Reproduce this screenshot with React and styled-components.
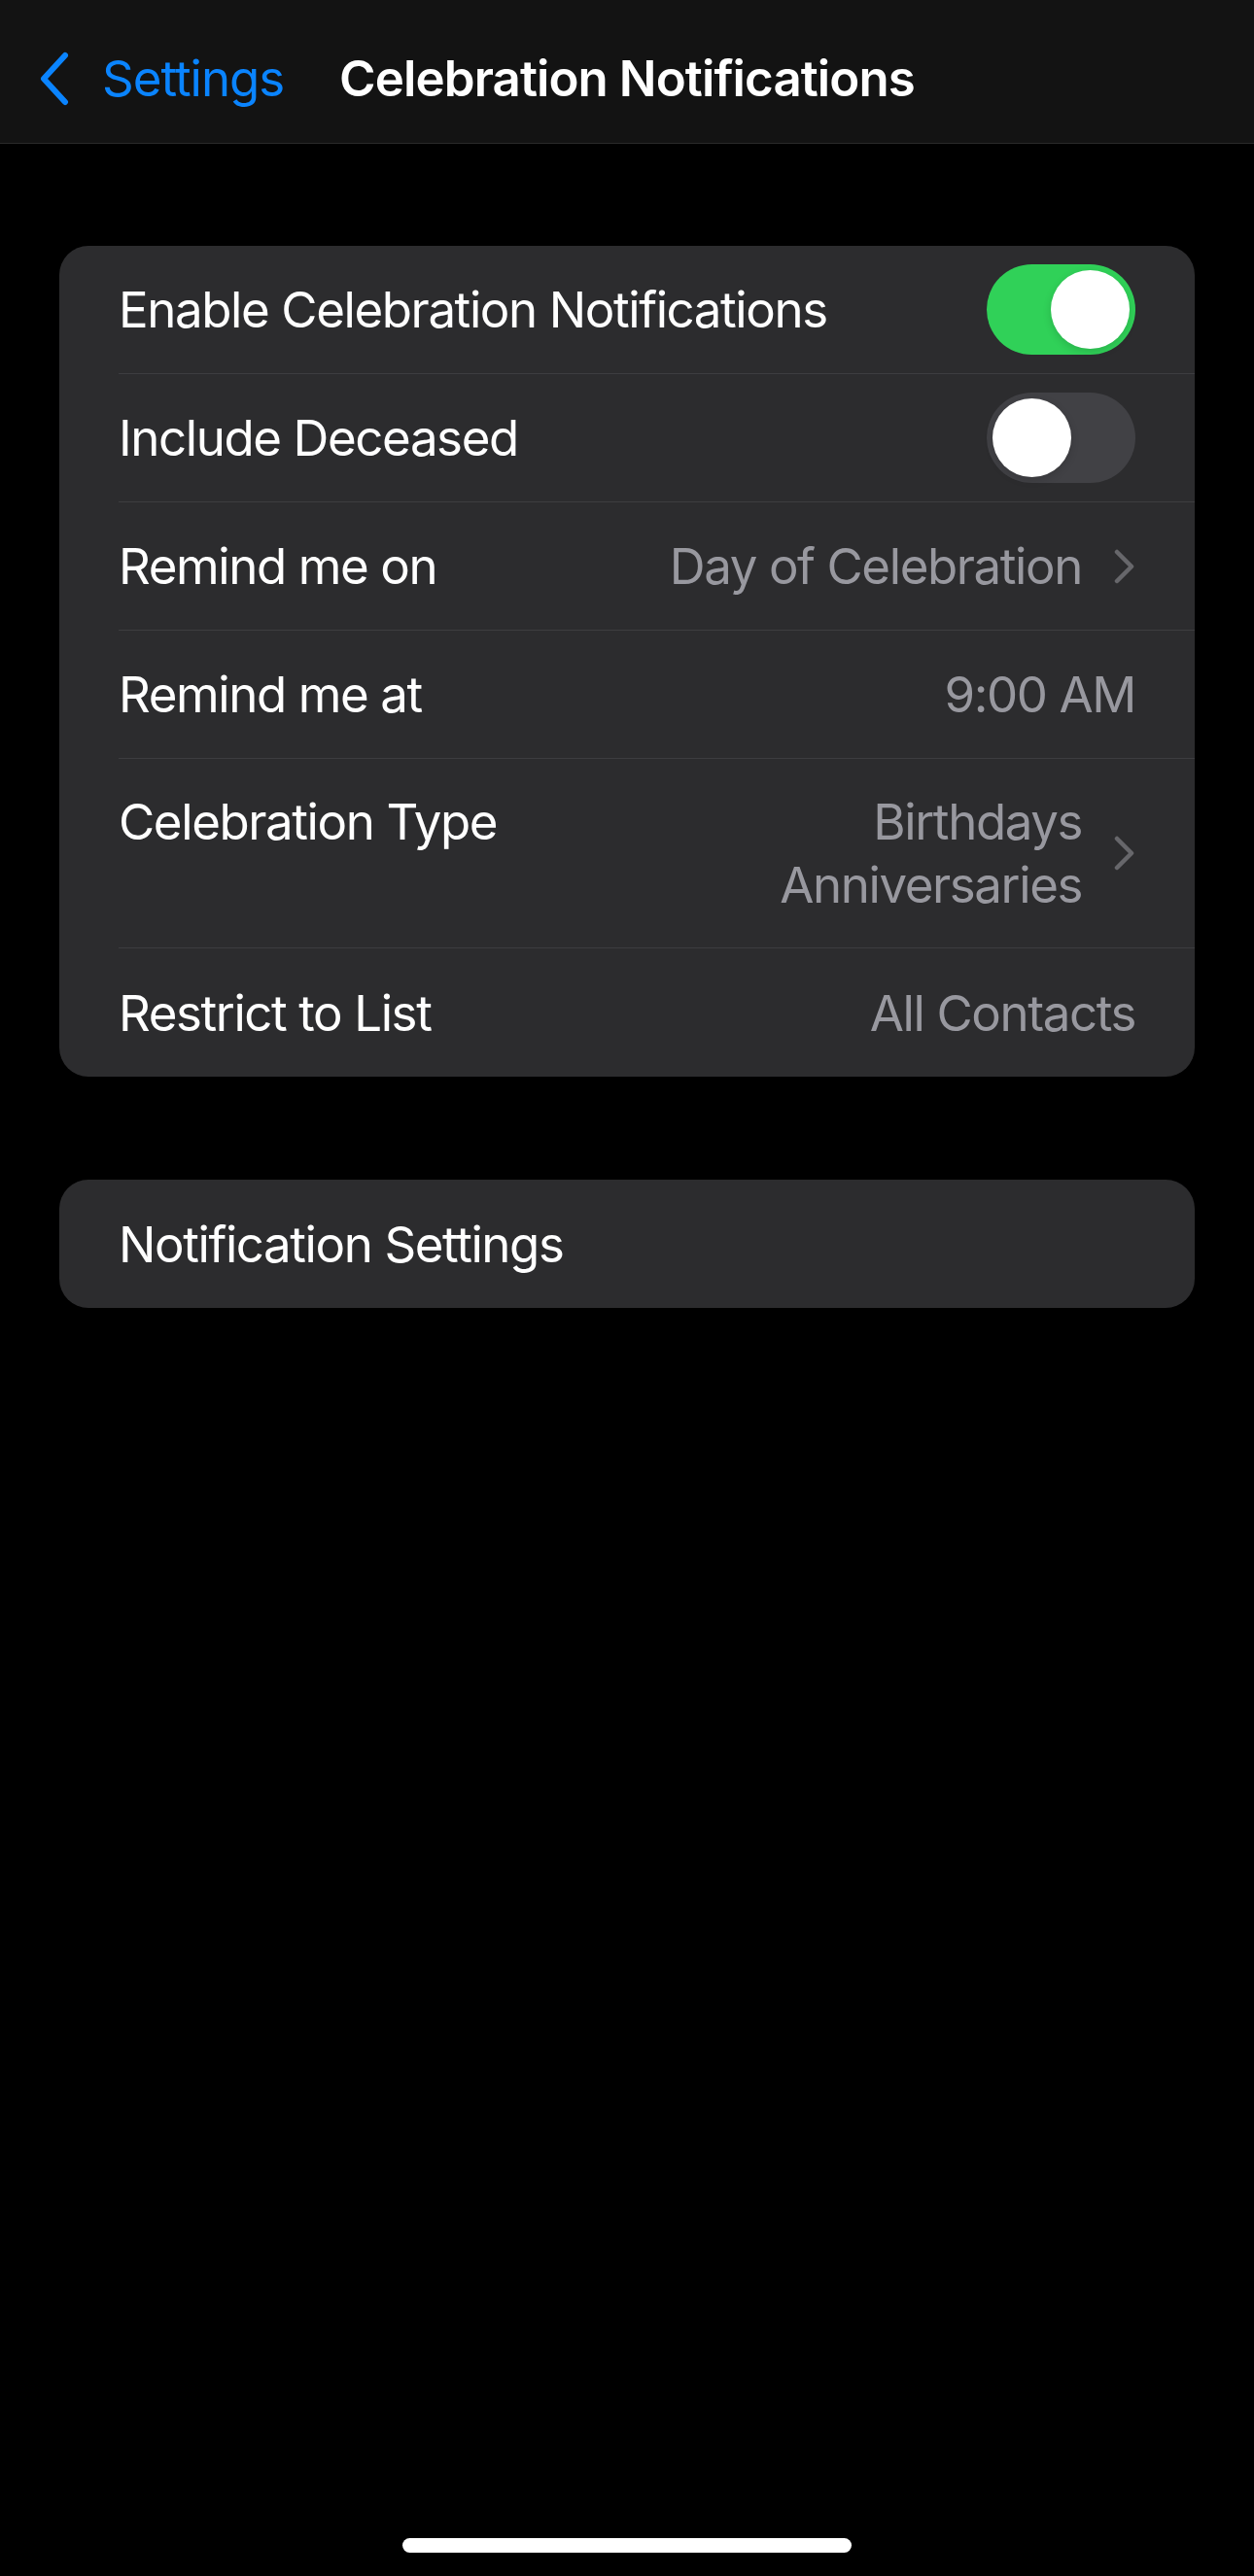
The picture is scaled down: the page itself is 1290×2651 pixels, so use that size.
import React from 'react';
import styled, { createGlobalStyle } from 'styled-components';

const GlobalStyle = createGlobalStyle`
  html, body {
    margin: 0;
    padding: 0;
    background: #000;
  }
  body {
    font-family: Inter, "Noto Sans", sans-serif;
    -webkit-font-smoothing: antialiased;
  }
`;

const Screen = styled.div`
  width: 1290px;
  height: 2651px;
  background: #000;
  display: flex;
  flex-direction: column;
  overflow: hidden;
`;

const NavBar = styled.header`
  height: 148px;
  box-sizing: border-box;
  padding-top: 14px;
  background: #131313;
  border-bottom: 1px solid #2a2a2a;
  display: grid;
  grid-template-columns: 1fr auto 1fr;
  align-items: center;
`;

const BackButton = styled.button`
  justify-self: start;
  display: flex;
  align-items: center;
  gap: 33px;
  background: none;
  border: 0;
  padding: 0 0 0 40px;
  color: #0a84ff;
  font-family: Inter, sans-serif;
  font-size: 51px;
  font-weight: 400;
  letter-spacing: -1px;
  cursor: pointer;
`;

const Title = styled.h1`
  margin: 0;
  color: #fff;
  font-size: 51px;
  font-weight: 600;
  letter-spacing: -0.9px;
`;

const Content = styled.main`
  display: flex;
  flex-direction: column;
  gap: 106px;
  padding: 105px 61px 0;
`;

const Group = styled.section`
  background: #2c2c2e;
  border-radius: 30px;
  padding-left: 61px;
  overflow: hidden;
`;

const Row = styled.div`
  display: flex;
  align-items: center;
  justify-content: space-between;
  gap: 30px;
  min-height: 132px;
  box-sizing: border-box;
  padding: ${p => (p.$multi ? '32px 61px 32px 0' : '0 61px 0 0')};
  border-bottom: 1px solid #3d3d40;
  font-size: 51px;
  line-height: 65px;
  letter-spacing: -1.4px;

  &:last-child {
    border-bottom: 0;
  }
`;

const Label = styled.span`
  color: #fff;
  align-self: ${p => (p.$top ? 'flex-start' : 'center')};
`;

const Detail = styled.span`
  display: flex;
  align-items: center;
  gap: 33px;
  color: #98989f;
  text-align: right;
`;

const Lines = styled.span`
  display: flex;
  flex-direction: column;
  align-items: flex-end;
`;

const Switch = styled.span`
  width: 153px;
  height: 93px;
  box-sizing: border-box;
  padding: 6px;
  border-radius: 47px;
  background: ${p => (p.$on ? '#30d158' : '#414145')};
  display: flex;
  justify-content: ${p => (p.$on ? 'flex-end' : 'flex-start')};
  flex-shrink: 0;
`;

const Knob = styled.span`
  width: 81px;
  height: 81px;
  border-radius: 50%;
  background: #fff;
  box-shadow: 0 3px 8px rgba(0, 0, 0, 0.15);
`;

const HomeIndicator = styled.div`
  margin-top: auto;
  margin-bottom: 24px;
  align-self: center;
  width: 462px;
  height: 15px;
  border-radius: 8px;
  background: #fff;
`;

const BackChevron = () => (
  <svg width="32" height="56" viewBox="0 0 32 56" fill="none">
    <path d="M27 4 L5 28 L27 52" stroke="#0a84ff" strokeWidth="6" strokeLinecap="round" strokeLinejoin="round" />
  </svg>
);

const Chevron = () => (
  <svg width="22" height="36" viewBox="0 0 22 36" fill="none">
    <path d="M3 3 L18 18 L3 33" stroke="#67676b" strokeWidth="4.5" strokeLinecap="round" strokeLinejoin="round" />
  </svg>
);

const Toggle = ({ on }) => (
  <Switch $on={on}>
    <Knob />
  </Switch>
);

const App = () => {
  return (
    <Screen>
      <GlobalStyle />
      <NavBar>
        <BackButton>
          <BackChevron />
          Settings
        </BackButton>
        <Title>Celebration Notifications</Title>
        <span />
      </NavBar>
      <Content>
        <Group>
          <Row>
            <Label>Enable Celebration Notifications</Label>
            <Toggle on />
          </Row>
          <Row>
            <Label>Include Deceased</Label>
            <Toggle />
          </Row>
          <Row>
            <Label>Remind me on</Label>
            <Detail>
              Day of Celebration
              <Chevron />
            </Detail>
          </Row>
          <Row>
            <Label>Remind me at</Label>
            <Detail>9:00 AM</Detail>
          </Row>
          <Row $multi>
            <Label $top>Celebration Type</Label>
            <Detail>
              <Lines>
                <span>Birthdays</span>
                <span>Anniversaries</span>
              </Lines>
              <Chevron />
            </Detail>
          </Row>
          <Row>
            <Label>Restrict to List</Label>
            <Detail>All Contacts</Detail>
          </Row>
        </Group>
        <Group>
          <Row>
            <Label>Notification Settings</Label>
          </Row>
        </Group>
      </Content>
      <HomeIndicator />
    </Screen>
  );
};

export default App;
